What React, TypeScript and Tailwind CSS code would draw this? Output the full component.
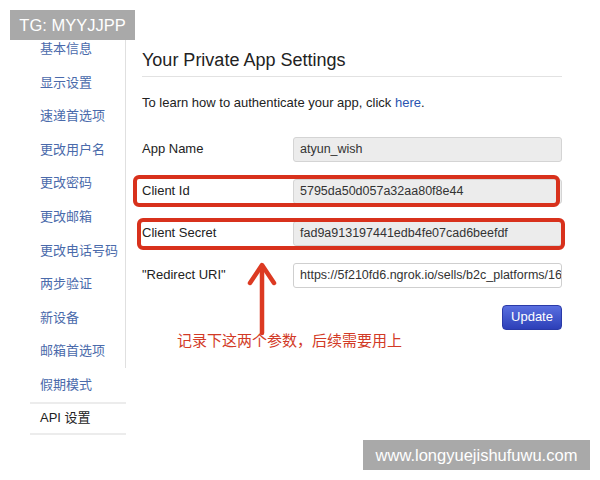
import React from "react";

const menu = [
  "基本信息",
  "显示设置",
  "速递首选项",
  "更改用户名",
  "更改密码",
  "更改邮箱",
  "更改电话号码",
  "两步验证",
  "新设备",
  "邮箱首选项",
];

const font = { fontFamily: '"Liberation Sans", "Noto Sans CJK SC", sans-serif' };

function Row({
  label,
  value,
  readOnly = true,
  mark,
}: {
  label: string;
  value: string;
  readOnly?: boolean;
  mark?: "id" | "secret";
}) {
  return (
    <div className="relative flex items-center h-[25px]">
      {mark === "id" && (
        <div className="absolute left-[-9px] right-[2px] top-[-4px] bottom-[-3px] border-[4px] border-[#d8311c] rounded-[6px] pointer-events-none" />
      )}
      {mark === "secret" && (
        <div className="absolute left-[-5px] right-[-3px] top-[-3px] bottom-[-4px] border-[4px] border-[#d8311c] rounded-[6px] pointer-events-none" />
      )}
      <div className="w-[151px] text-[13px] text-[#222]">{label}</div>
      <div
        className={`flex-1 h-[25px] flex items-center px-[6px] rounded-[3px] border text-[12.5px] text-[#333] overflow-hidden whitespace-nowrap ${
          readOnly ? "bg-[#ececec] border-[#d4d4d4]" : "bg-white border-[#cfcfcf]"
        }`}
      >
        {value}
      </div>
    </div>
  );
}

export default function App() {
  return (
    <div className="relative w-[600px] h-[480px] bg-white overflow-hidden" style={font}>
      <div className="absolute left-[10px] top-[10px] w-[125px] h-[30px] flex items-center justify-center bg-[#a9a9a9] text-white text-[16.5px]">
        TG: MYYJJPP
      </div>

      <div className="flex">
        <div className="w-[126px] pt-[32px] flex flex-col">
          <div className="border-r border-[#e0e0e0]">
            {menu.map((m) => (
              <div key={m} className="h-[33.6px] flex items-center pl-[40px] text-[13px] text-[#4a6aab]">
                {m}
              </div>
            ))}
          </div>
          <div className="h-[33.6px] flex items-center pl-[40px] text-[13px] text-[#4a6aab]">假期模式</div>
          <div className="ml-[30px] h-[33px] border-t-2 border-b-2 border-[#ececec] flex items-center pl-[10px] text-[13px] text-[#222]">
            API 设置
          </div>
        </div>

        <div className="w-[420px] ml-[16px] pt-[48px]">
          <h1 className="text-[18px] text-[#222] leading-[24px] pb-[4px] border-b border-[#e2e2e2]">
            Your Private App Settings
          </h1>
          <p className="mt-[16px] text-[13px] text-[#222]">
            To learn how to authenticate your app, click <span className="text-[#2a55b0]">here</span>.
          </p>

          <div className="mt-[24px] flex flex-col gap-[17px]">
            <Row label="App Name" value="atyun_wish" />
            <Row label="Client Id" value="5795da50d057a32aa80f8e44" mark="id" />
            <Row label="Client Secret" value="fad9a913197441edb4fe07cad6beefdf" mark="secret" />
            <Row label={'"Redirect URI"'} value="https://5f210fd6.ngrok.io/sells/b2c_platforms/165" readOnly={false} />
          </div>

          <div className="relative mt-[17px] flex justify-end">
            <svg
              className="absolute left-[104px] top-[-44px]"
              width="32"
              height="76"
              viewBox="0 0 32 76"
            >
              <path d="M16 6 L16 72" stroke="#dc3a22" strokeWidth="4.5" strokeLinecap="round" />
              <path d="M4 22 L16 4 L28 22" stroke="#dc3a22" strokeWidth="4.5" fill="none" strokeLinecap="round" strokeLinejoin="round" />
            </svg>
            <button className="w-[60px] h-[25px] rounded-[4px] text-white text-[13px] bg-gradient-to-b from-[#5a6fe0] to-[#2d3fb8] border border-[#2a3aa8]">
              Update
            </button>
          </div>

          <div className="mt-[0px] ml-[35px] text-[15px] text-[#d23a26]">
            记录下这两个参数，后续需要用上
          </div>
        </div>
      </div>

      <div className="absolute left-[363px] top-[440px] w-[227px] h-[30px] flex items-center justify-center bg-[#a9a9a9] text-white text-[16.5px]">
        www.longyuejishufuwu.com
      </div>
    </div>
  );
}
